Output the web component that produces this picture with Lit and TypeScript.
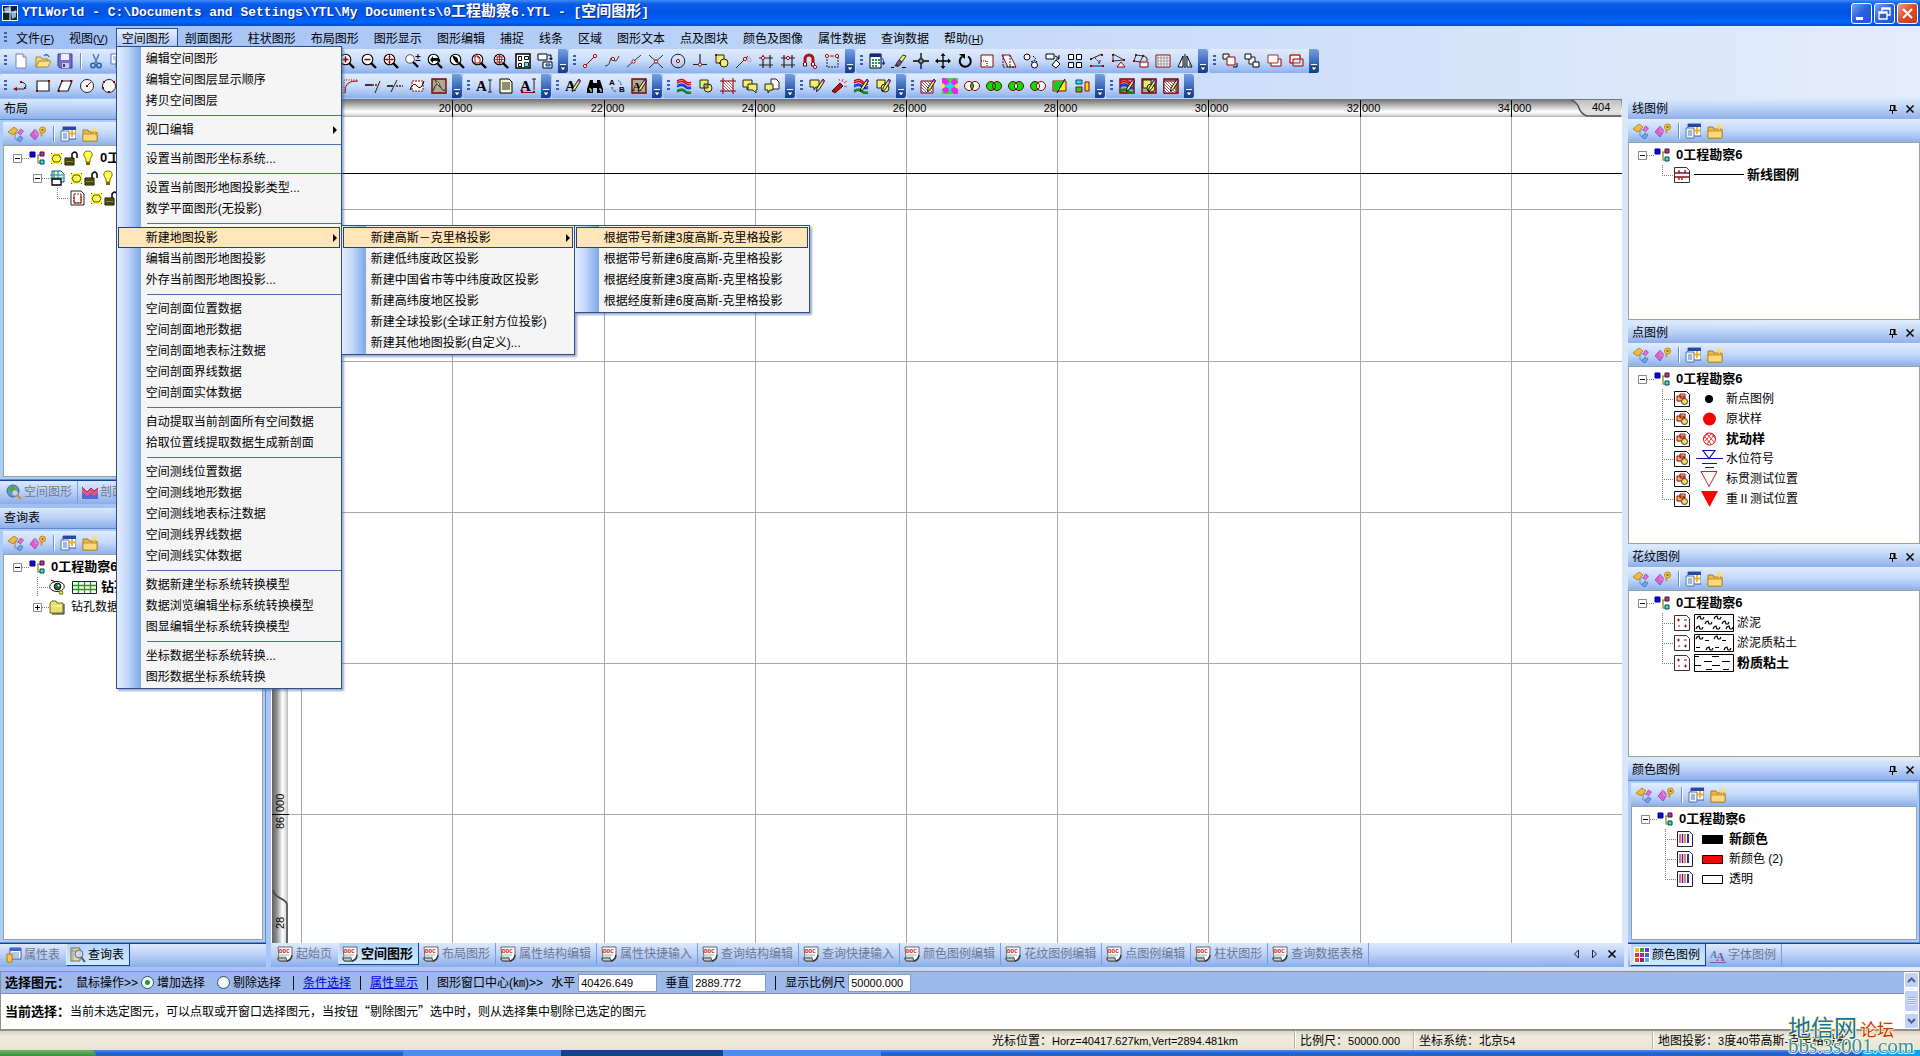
import { LitElement, html, svg, css, nothing } from "lit";
import { customElement } from "lit/decorators.js";
import { classMap } from "lit/directives/class-map.js";

const R = "#800000";

const mag = (inner: unknown) => svg`<circle cx="6.500" cy="6.500" r="5.300" fill="#fff" stroke="#000" stroke-width="1.100"/><path d="M10 10l5 5" stroke="#000" stroke-width="2.400"/>${inner}`;
const dot = (x: number, y: number, c = "#b00000") => svg`<circle cx=${x} cy=${y} r="1.600" fill="#fff" stroke=${c}/>`;
const nub = (x: number, y: number) => svg`<rect x=${x - 1} y=${y - 1} width="2" height="2" fill="#900000"/>`;
const pen = svg`<path d="M14 1l-6 9-.5 3.500 2.700-2L15.500 3z" fill="#f4ee70" stroke="#000" stroke-width=".9"/><path d="M13 2l2 1.500" stroke="#a020c0" stroke-width="2"/>`;
const shapes = svg`<path d="M2 2h8v8H2z" fill="#f4ee70" stroke="#222"/><circle cx="10" cy="10" r="4" fill="#f4ee70" stroke="#222"/>`;
const stripes = svg`<path d="M1 3q5-3 8 0t6 1M1 5q5-3 8 0t6 1" stroke="#e00000" fill="none" stroke-width="1.500"/><path d="M1 7.500q5-3 8 0t6 1M1 9q5-3 8 0t6 1" stroke="#1030e0" fill="none" stroke-width="1.300"/><path d="M1 12.500q5-3 8 0t6 1M1 14q5-3 8 0t6 1" stroke="#108020" fill="none" stroke-width="1.500"/>`;
const hatch = svg`<path d="M1 3h12v12H1z" fill="#fff" stroke=${R}/><path d="M1 12l3 3M1 9l6 6M1 6l9 9M1 3l12 12M4 3l9 9M7 3l6 6M10 3l3 3" stroke="#703050" stroke-width=".8"/>`;
const bubble = svg`<path d="M1 2h9v7H7l-2 3V9H1z" fill="#f4ee70" stroke="#222"/>`;
const bubble2 = svg`<path d="M6 6h9v6h-1v3l-3-3H6z" fill="#f4ee70" stroke="#222"/>`;
const pict = svg`<path d="M1 1h14v14H1z" fill="#b0a898" stroke=${R} stroke-width="1.400"/>`;
const venn = (a: string, m: string, b: string) => svg`<circle cx="5" cy="8" r="4.500" fill=${a}/><circle cx="11" cy="8" r="4.500" fill=${b}/><path d="M8 4.700a4.500 4.500 0 0 1 0 6.600a4.500 4.500 0 0 1 0-6.600z" fill=${m}/><circle cx="5" cy="8" r="4.500" fill="none" stroke=${R}/><circle cx="11" cy="8" r="4.500" fill="none" stroke=${R}/>`;
const G = "#00e000";
const W = "#fff";
const letterA = (x: number, s: number, c = "#000") => svg`<text x=${x} y="13" font-size=${s} font-weight="bold" font-family="Liberation Serif, serif" fill=${c}>A</text>`;

const icons: Record<string, unknown> = {
  blank: nothing,
  app: svg`<path d="M0 0h16v16H0z" fill="#fff"/><path d="M1 1h14v14H1z" fill="#123"/><path d="M2 3l5-1 2 3-3 3-3-1zM9 8l5-3v7l-4 2z" fill="#89b4dc"/><path d="M8 1v14M1 7h14" stroke="#fff"/>`,
  newf: svg`<path d="M3 1h7l3 3v11H3z" fill="#fff" stroke="#7482b8"/><path d="M10 1v3h3" fill="#dbe4f8" stroke="#7482b8"/>`,
  open: svg`<path d="M1 14V4h5l1 2h6v3" fill="#f7d67a" stroke="#a8842a"/><path d="M1 14l3-6h12l-3 6z" fill="#fbe28c" stroke="#a8842a"/><path d="M9 3q3-3 5 1" fill="none" stroke="#3a64b8" stroke-width="1.300"/>`,
  save: svg`<path d="M1 1h14v14H3l-2-2z" fill="#7070c8" stroke="#3c3c90"/><path d="M4 1h8v6H4z" fill="#eef"/><path d="M5 10h7v5H5z" fill="#ccd"/><path d="M6 11h2v3H6z" fill="#339"/>`,
  cut: svg`<path d="M5 1l4 9M11 1L7 10" stroke="#5078b8" stroke-width="1.500"/><circle cx="5" cy="12.500" r="2.200" fill="none" stroke="#2e58a8" stroke-width="1.500"/><circle cx="11" cy="12.500" r="2.200" fill="none" stroke="#2e58a8" stroke-width="1.500"/>`,
  copy: svg`<path d="M1 1h8v10H1z" fill="#fff" stroke="#5070b8"/><path d="M6 5h8v10H6z" fill="#fff" stroke="#5070b8"/><path d="M3 4h4M3 6h2M8 8h4M8 10h4M8 12h4" stroke="#7a94cc"/>`,
  zin: mag(svg`<path d="M3.500 6.500h6M6.500 3.500v6" stroke=${R} stroke-width="1.500"/>`),
  zout: mag(svg`<path d="M3.500 6.500h6" stroke=${R} stroke-width="1.500"/>`),
  zall: mag(svg`<path d="M2 6.500h9M6.500 2v9" stroke="#b00000"/><path d="M4 5v3M9 5v3M5 4h3M5 9h3" stroke="#b00000" stroke-width=".8"/>`),
  zpm: svg`<circle cx="5" cy="6" r="4.300" fill="#fff" stroke="#555"/><path d="M8 9l5 5" stroke="#000" stroke-width="2.400"/><path d="M10.500 3.500h5M13 1v5M10.500 7.500h5" stroke="#000"/>`,
  zprev: mag(svg`<path d="M3 7l3-4v2h4q4 0 3 5q-1-3-7-2v2z" fill="#000"/>`),
  znext: mag(svg`<path d="M9 9L8 5 4 3l1 3 2 3 2 1z" fill="#000" stroke="#000"/>`),
  zdoc: mag(svg`<path d="M4 3h3l2 2v5H4z" fill="#fff" stroke="#b00000"/><path d="M7 3v2h2" stroke="#b00000" fill="none"/>`),
  zglobe: mag(svg`<path d="M2 6.500h9M6.500 2v9M3 4h7M3 9h7M6.500 2q-5 4 0 9M6.500 2q5 4 0 9" stroke="#b00000" fill="none" stroke-width=".8"/>`),
  panes: svg`<path d="M1 1h14v14H1z" fill="#fff" stroke="#000" stroke-width="1.500"/><path d="M3.500 3.500h3v4h-3zM9.500 3.500h4v3h-4zM3.500 10.500h3v3h-3z" fill="#fff" stroke="#000"/><path d="M9.500 9.500h4v4h-4z" fill="#5fe8f0" stroke="#000" stroke-width=".8"/>`,
  swap: svg`<path d="M1 1h9v6H1zM6 9h9v6H6z" fill="#fff" stroke="#000"/><path d="M9 11h4v2H9z" fill="#5fe8f0" stroke="#138"/><path d="M11 2h3v4" fill="none" stroke="#000"/><path d="M12 5h4l-2 2.500z"/>`,
  line: svg`<path d="M3 13L13 3" stroke="#900"/>${dot(3, 13)}${dot(13, 3)}`,
  curve: svg`<path d="M1 13q4 0 5-5t3-2 3 2 3-5" stroke="#333" fill="none"/>${dot(9, 6)}`,
  mid: svg`<path d="M1 14L15 2" stroke="#333"/>${dot(7.5, 8.5)}`,
  cross: svg`<path d="M1 2l14 13M15 2L1 15" stroke="#333"/>${dot(8, 8.5)}`,
  centre: svg`<circle cx="8" cy="8" r="6.800" fill="none" stroke="#222"/>${dot(8, 8)}`,
  perp: svg`<path d="M8 1v10M1 11.500h14" stroke="#222" stroke-width="1.200"/>${dot(8, 11.5)}`,
  shape: svg`${shapes}${nub(2, 2)}${nub(6, 10)}`,
  tang: svg`<path d="M0 15L12 3" stroke="#333"/>${dot(9, 6)}<circle cx="13" cy="7" r="2" fill="none" stroke="#aaa"/>`,
  hashA: svg`<path d="M5 2v13M12 2v13M1 5h14M1 12h14" stroke="#222" stroke-width="1.200"/>${dot(5, 5)}`,
  hashB: svg`<path d="M4 2v13M12 2v13M1 5h14M1 12h14" stroke="#222" stroke-width="1.200"/>${dot(8, 5)}`,
  magnet: svg`<path d="M3 12V6a4 4 0 0 1 8 0v6" fill="none" stroke="#b01010" stroke-width="3"/><path d="M1.500 10v3h3v-3M9.500 10v3h3v-3" fill="#fff" stroke="#600"/>${dot(13, 14)}`,
  dots: svg`<path d="M3 3v11h11V3" fill="none" stroke="#222" stroke-dasharray="2 1"/>${dot(3, 3)}${dot(13, 3)}<path d="M6 3h4" stroke="#b00"/>`,
  calc: svg`<path d="M1 1h11v14H1z" fill="#fff" stroke="#000"/><path d="M1 1h11v3H1z" fill="#20208a"/><path d="M3 6h2v2H3zM6 6h2v2H6zM9 6h2v2H9zM3 9h2v2H3zM6 9h2v2H6zM9 9h2v2H9zM3 12h2v2H3zM6 12h2v2H6z" fill="#1a9a60"/><path d="M12 5q3 0 2.500 6M12.500 9l2 3 1.500-3" fill="none" stroke="#1020d0"/>`,
  erase: svg`<path d="M8 7l4-5 3 1-4 6z" fill="#f0f060" stroke="#333"/><path d="M5 11l3-4 3 2-3 4z" fill="#a030c0" stroke="#333"/><path d="M3 13l2-2 3 2-1 1z" fill="#333"/><path d="M0 14.500h3M11 14.500h4" stroke="#000"/>`,
  target: svg`<path d="M8 0v16M0 8h16" stroke="#000" stroke-width="1.300"/><path d="M6 6h4v4H6z" fill="#999" stroke="#000"/>`,
  move: svg`<path d="M8 2v12M2 8h12" stroke="#000" stroke-width="1.300"/><path d="M8 0l2.500 3h-5zM8 16l2.500-3h-5zM0 8l3-2.500v5zM16 8l-3-2.500v5z"/>`,
  rotate: svg`<path d="M11 3.500a5.500 5.500 0 1 1-6 .3" fill="none" stroke="#000" stroke-width="2"/><path d="M2 1h6v5z"/>`,
  scale: svg`<path d="M2 2h12v12H2z" fill="#fff" stroke="#900"/><path d="M2 8h6v6" fill="none" stroke="#000" stroke-dasharray="1 1"/>`,
  skew: svg`<path d="M1 2h8l6 12H7z" fill="#fff" stroke="#900"/><path d="M2 2v12h13M9 2v12" fill="none" stroke="#222" stroke-dasharray="2 1"/>`,
  dupe: svg`<circle cx="4" cy="4" r="3" fill="#fff" stroke="#000"/><circle cx="11.500" cy="12" r="3" fill="#fff" stroke="#000"/><path d="M8 9l4-2 2 2M10 3l3 3" fill="none" stroke="#000" stroke-dasharray="2 1"/>`,
  dupe2: svg`<path d="M1 1h8v5H1zM11 7l4 4-4 4-4-3z" fill="#fff" stroke="#000"/><path d="M10 3l4 2M14 2v4h-3" fill="none" stroke="#000"/>`,
  array: svg`<path d="M1.500 1.500h5v5h-5zM9.500 1.500h5v5h-5zM1.500 9.500h5v5h-5zM9.500 9.500h5v5h-5z" fill="#fff" stroke="#000"/>`,
  offset: svg`<path d="M2 6l11-5M2 13h12" stroke="#222"/><path d="M6 5l5 5M11 7v3H8" fill="none" stroke="#222" stroke-dasharray="2 1"/>${nub(2, 6)}${nub(13, 2)}${nub(2, 13)}${nub(14, 13)}`,
  tri: svg`<path d="M2 8V1l11 6z" fill="none" stroke="#333"/><path d="M10 9l4 5H6z" fill="#fff" stroke="#900"/>${nub(2, 2)}${nub(2, 8)}${nub(13, 7)}`,
  poly: svg`<path d="M3 2l7 1-3 6-6-1z" fill="none" stroke="#333"/><path d="M7 9h8v5H7z" fill="#fff" stroke="#900"/><path d="M10 2l4 3v3" fill="none" stroke="#222"/>${nub(3, 2)}${nub(10, 3)}${nub(1, 8)}`,
  mesh: svg`<path d="M1 2h14v12H1z" fill="#fff" stroke="#900"/><path d="M3 2v12M6 2v12M9 2v12M12 2v12M1 5h14M1 8h14M1 11h14" stroke="#999"/>`,
  mirror: svg`<path d="M8 1v14" stroke="#000"/><path d="M6 3v11H1zM10 3v11h5z" fill="#fff" stroke="#000"/><path d="M12 8v6h2z" fill="#888"/>`,
  front: svg`<path d="M1 1h6v5H1z" fill="#fff" stroke="#000"/><path d="M5 4h8v8H5z" fill="#fff" stroke="#900"/><path d="M11 14h4v-4" fill="none" stroke="#000"/>`,
  back: svg`<path d="M5 4h6v7H5z" fill="#fff" stroke="#222"/><path d="M1 1h6v5H1zM9 9h6v5H9z" fill="#fff" stroke="#000"/>`,
  up: svg`<path d="M5 6h10v7H5z" fill="#fff" stroke="#900"/><path d="M2 2h10v8H2z" fill="#fff" stroke="#b22"/>`,
  down: svg`<path d="M2 2h10v8H2z" fill="#fff" stroke="#b22"/><path d="M5 6h10v7H5z" fill="#dce8fb" stroke="#900"/><path d="M2 2h10v8H2z" fill="none" stroke="#b22"/>`,
  uturn: svg`<path d="M2 11h9q4-3 0-6l-3-1" fill="none" stroke="#222"/><path d="M0 11l4-2v4z" fill="#900"/>${nub(8, 4)}${nub(12, 10)}`,
  rect: svg`<path d="M2 3h12v10H2z" fill="#fff" stroke="#222" stroke-width="1.200"/>${nub(2, 13)}${nub(14, 3)}`,
  para: svg`<path d="M5 3h10l-4 10H1z" fill="#fff" stroke="#222" stroke-width="1.200"/>${nub(2, 13)}${nub(5, 3)}${nub(14, 3)}`,
  circ: svg`<circle cx="8" cy="8" r="6.500" fill="#fff" stroke="#222"/><path d="M8 8l4-4" stroke="#900"/>${nub(8, 8)}`,
  circ3: svg`<circle cx="8" cy="8" r="6.500" fill="#fff" stroke="#222"/>${nub(3, 4)}${nub(13, 4)}${nub(8, 14)}${nub(2, 10)}`,
  fillet: svg`<path d="M2 15q-1-13 13-12" fill="none" stroke="#900"/><path d="M1 15V2h14" fill="none" stroke="#900" stroke-dasharray="1 1.500"/>`,
  extend: svg`<path d="M0 7h7" stroke="#000" stroke-width="1.500"/><path d="M7 7h6" stroke="#900" stroke-width="1.500" stroke-dasharray="2 1"/><path d="M10 15l5-12" stroke="#222"/>`,
  trim: svg`<path d="M0 8h6" stroke="#000" stroke-width="1.500"/><path d="M9 8h7" stroke="#900" stroke-width="1.500" stroke-dasharray="2 1"/><path d="M4 14l6-12" stroke="#222"/>`,
  wave: svg`<path d="M3 3h11v10H3z" fill="#fff" stroke="#900" stroke-dasharray="2 1"/><path d="M1 12q3-9 7-4t7-5" fill="none" stroke="#000"/>`,
  photo: svg`${pict}<path d="M2 13q4-11 7-5t5 4" fill="none" stroke="#222"/><path d="M4 2l2 4 3 3-1-4z" fill="#f4ee40" stroke="#222" stroke-width=".7"/>`,
  textI: svg`${letterA(0, 15)}<path d="M12 2h4M12 14h4M14 2v12" stroke="#222"/>`,
  note: svg`<path d="M2 1h9l3 3v11H2z" fill="#fbfbd0" stroke="#000"/><path d="M4 5h8M4 7h8M4 9h8M4 11h8" stroke="#222"/>`,
  textR: svg`${letterA(0, 15)}<path d="M12 1h4M14 1v11" stroke="#222"/><path d="M1 14.500h14" stroke="#900"/>${nub(2, 14)}${nub(14, 14)}`,
  textP: svg`${letterA(0, 15)}${pen}`,
  find: svg`<path d="M3 2h3v3h4V2h3l3 9v4h-6v-5H6v5H0v-4z" fill="#000"/><path d="M2 11h2v3M12 11h2v3" stroke="#fff" fill="none"/>`,
  replace: svg`<text x="0" y="7" font-size="8" font-weight="bold" font-family="Liberation Sans, sans-serif">A</text><text x="10" y="14" font-size="8" font-weight="bold" font-family="Liberation Sans, sans-serif">B</text><path d="M3 9q0 5 5 4M12 7q0-3-3-5" fill="none" stroke="#222" stroke-dasharray="1.500 1"/>`,
  photoA: svg`${pict}${letterA(1, 13)}${pen}`,
  stripes,
  shape2: svg`${shapes}<path d="M6 6h4v4H6z" fill="#a8b060" stroke="#222"/>`,
  crop: svg`<path d="M3 3h10v10H3z" fill="#fff"/><path d="M3 10l3 3M3 7l6 6M3 4l9 9M5 3l8 8M8 3l5 5" stroke="#c03030" stroke-width=".8"/><path d="M3 0v16M13 0v16M0 3h16M0 13h16" stroke=${R}/>`,
  bub1: svg`${bubble}${bubble2}`,
  bub2: svg`<path d="M7 1h5l3 3v7H7z" fill="#fff" stroke="#222"/><path d="M1 6h8v6H6l-2 3v-3H1z" fill="#f4ee70" stroke="#222"/>`,
  bubP: svg`${bubble}${pen}`,
  marker: svg`<path d="M1 13l8-8 3 3-8 7z" fill="#b01818" stroke="#500"/><path d="M11 4l1-3M13 5l3-2M13 8l3 1M9 3L8 1" stroke="#d04040"/>`,
  stripesP: svg`${stripes}${pen}`,
  shapeP: svg`${shapes}${pen}`,
  hatchP: svg`${hatch}${pen}`,
  burst: svg`<path d="M0 0h16v16H0z" fill="#f020f0"/><path d="M4 0h8L8 5zM4 16h8l-4-5z" fill="#30e030"/><path d="M0 5v6l5-3zM16 5v6l-5-3z" fill="#f0f020"/><path d="M12 0h4v4zM0 16v-4l4 4z" fill="#30e030"/><path d="M8 3l2 3 4 2-4 2-2 4-2-4-4-2 4-2z" fill="#20d8f0"/>`,
  vennI: venn(W, G, W),
  vennU: venn(G, G, G),
  vennX: venn(G, W, G),
  vennD: venn(G, W, W),
  split: svg`<path d="M1 3h13v10H1z" fill="#f0f020" stroke="#900"/><path d="M2 4h9L6 12H2z" fill="#00d020"/><path d="M5 15l8-14" stroke="#000"/>`,
  blocks: svg`<path d="M2 2h6v4H2z" fill="#30d8f0" stroke="#146"/><path d="M2 9h6v5H2z" fill="#20d020" stroke="#900"/><path d="M11 4h4v9h-4z" fill="#f8e020" stroke="#900"/>`,
  boxStripes: svg`${pict}${stripes}${pen}`,
  boxShape: svg`${pict}${shapes}${pen}`,
  boxHatch: svg`${pict}${hatch}${pen}`,
  objs: svg`<path d="M0 6l6-5 4 3-5 5z" fill="#f0bc3c" stroke="#a87814" stroke-width=".8"/><path d="M7 7h4M7 7v6h3" fill="none" stroke="#888"/><path d="M12.500 3l3 2-3 4-2.500-2z" fill="#e070d8" stroke="#a040a0" stroke-width=".7"/><path d="M12 10l3 2-3 4-3-2z" fill="#70a8f0" stroke="#3060b0" stroke-width=".7"/>`,
  gem: svg`<path d="M5 3l4 5-4 6-5-5z" fill="#d860d0" stroke="#983898" stroke-width=".7"/><path d="M5 3l1 6 3-1" fill="none" stroke="#f0a0e8" stroke-width=".8"/><circle cx="12.500" cy="4" r="3" fill="#f4c040" stroke="#a87814" stroke-width=".8"/><circle cx="12.500" cy="4" r="1" fill="#805800"/><path d="M11.500 7v3.500" stroke="#d09820" stroke-width="2"/>`,
  table: svg`<path d="M3 1h13v12H3z" fill="#fff" stroke="#3a5c98"/><path d="M3 1h13v3H3z" fill="#2848a8"/><path d="M1 5h8v10H1z" fill="#eef3fc" stroke="#5878a8"/><path d="M3 8h4M3 10h4M3 12h4" stroke="#5878a8"/><path d="M12 4v7M8.500 7.500h7" stroke="#e8b020" stroke-width="1.800"/>`,
  newdir: svg`<path d="M1 15V4h5l1 2h8v9z" fill="#f0b840" stroke="#a87c1c"/><path d="M1 15V8h14v7z" fill="#fbd878" stroke="#a87c1c" stroke-width=".7"/><path d="M12.500 0v7M9 3.500h7M10 1l5 5M15 1l-5 5" stroke="#f8e060"/>`,
  root: svg`<path d="M8 5h3M9 5v8h3" fill="none" stroke="#908010" stroke-width="1.200"/><path d="M1 2h5v5H1z" fill="#0808d0" stroke="#000080"/><path d="M11 2h4v4h-4z" fill="#f010d0" stroke="#222"/><path d="M11 10h4v4h-4z" fill="#20e8e8" stroke="#044"/>`,
  sun: svg`<path d="M3 3h11v11H3z" fill="#ffff40"/><path d="M6 5h5l2 3.500L11 12H6L4 8.500z" fill="#f8f860" stroke="#605000"/><path d="M3 3l1 1M14 3l-1 1M3 14l1-1M14 14l-1-1" stroke="#605000"/>`,
  lock: svg`<path d="M1 8h9v7H1z" fill="#8c8c10" stroke="#000"/><path d="M2 10h7M2 13h7" stroke="#000"/><path d="M8 8V4q3-4 5 0v4" fill="none" stroke="#000" stroke-width="1.500"/>`,
  bulb: svg`<path d="M8 1q5 0 4 5l-2 3v3H6V9L4 6q-1-5 4-5z" fill="#ffff50" stroke="#807000"/><path d="M6 12h4v3H6z" fill="#806800"/>`,
  sheets: svg`<path d="M3 1h9l3 3v8H3z" fill="#e8f4f4" stroke="#066"/><path d="M1 5h13M1 8h13M5 1v11M9 1v11" stroke="#188"/><path d="M3 9h9v6H3z" fill="#fff" stroke="#000" stroke-width="1.300"/>`,
  page: svg`<path d="M2 1h10l3 3v11H2z" fill="#fff" stroke="#222"/><path d="M5 4h7v9H5z" fill="#fff" stroke="#a01010" stroke-dasharray="2 1"/><path d="M5 6v7h7V5" fill="none" stroke="#a01010"/>`,
  lineDoc: svg`<path d="M.5 .5h12l3 3v12H.5z" fill="#fff" stroke="#333"/><path d="M1 6h14M1 10h14M5 3v3M8 10v3M11 3v3M5 10v3" stroke="#901010" stroke-width="1.300"/>`,
  pointDoc: svg`<path d="M.5 .5h12l3 3v12H.5z" fill="#fff" stroke="#111"/><path d="M3 5h7v5H3z" fill="#f8b860" stroke="#900"/><path d="M6 3h5v4H6z" fill="none" stroke="#900"/><circle cx="10.500" cy="10.500" r="3" fill="#e8e060" stroke="#333"/>`,
  patDoc: svg`<path d="M.5 .5h12l3 3v12H.5z" fill="#fff" stroke="#333"/><path d="M3 5h3M4.500 3.500v3M10 5h3M4 11h2M10 11h3M11.500 9.500v3" stroke="#a01010"/>`,
  colDoc: svg`<path d="M.5 .5h12l3 3v12H.5z" fill="#fff" stroke="#222"/><path d="M3 3v9" stroke="#e03080" stroke-width="1.500"/><path d="M5.500 3v9" stroke="#402090" stroke-width="1.500"/><path d="M8 3v9" stroke="#e06010" stroke-width="1.500"/><path d="M11 3v9" stroke="#1838c0" stroke-width="2"/>`,
  eye: svg`<ellipse cx="8" cy="7.500" rx="7.300" ry="5" fill="#fff" stroke="#111"/><circle cx="8.500" cy="7.500" r="3.300" fill="#2a6a50" stroke="#000"/><circle cx="9.500" cy="6.500" r="1" fill="#fff"/><path d="M2 1l4 2M10 13l4 2" stroke="#000"/><circle cx="12" cy="13.500" r="1.800" fill="#f0f040" stroke="#660"/>`,
  dir: svg`<path d="M1 14V4l2-2h4l1 2h6v10z" fill="#e8e070" stroke="#706820"/><path d="M2 7h11" stroke="#fffcc0"/><path d="M15 5v10H3" fill="none" stroke="#222"/>`,
  globe: svg`<circle cx="7" cy="7" r="6" fill="#5a98d8" stroke="#3a6890"/><path d="M3 4q4-4 6 0t-3 4-3-4zM9 8q3 0 2 3" fill="#58a838"/><circle cx="9" cy="9" r="3.200" fill="#cfe6fa" fill-opacity=".8" stroke="#888"/><path d="M11 11l4 4" stroke="#c89030" stroke-width="2"/>`,
  chart: svg`<path d="M0 3l5 5 4-4 3 3 4-3v11H0z" fill="#e85080"/><path d="M0 8l5 4 4-3 3 3 4-3v6H0z" fill="#5868d0"/><path d="M0 3l5 5 4-4 3 3 4-3" fill="none" stroke="#a02060"/>`,
  attr: svg`<path d="M4 1h11v11H4z" fill="#fff" stroke="#3858a0"/><path d="M4 1h11v3H4z" fill="#3868c8"/><path d="M6 6h7M6 8h7M6 10h7" stroke="#7890c0"/><path d="M1 7h5v8H1z" fill="#f8c840" stroke="#a88010"/>`,
  query: svg`<path d="M1 1h9v13H1z" fill="#e8dcb0" stroke="#806848"/><path d="M3 1v13M1 4h9" stroke="#8898c0"/><circle cx="9" cy="7" r="4" fill="#c8dcf8" fill-opacity=".8" stroke="#667"/><path d="M11 10l4 5" stroke="#555" stroke-width="2"/>`,
  palette: svg`<path d="M0 0h16v16H0z" fill="#fff"/><path d="M1 1h4v4H1z" fill="#f8b820"/><path d="M6 1h4v4H6z" fill="#38a830"/><path d="M11 1h4v4h-4z" fill="#7030d0"/><path d="M1 6h4v4H1z" fill="#e83030"/><path d="M6 6h4v4H6z" fill="#c02080"/><path d="M11 6h4v4h-4z" fill="#3070e0"/><path d="M1 11h4v4H1z" fill="#e05020"/><path d="M6 11h4v4H6z" fill="#8020a0"/><path d="M11 11h4v4h-4z" fill="#38b8f0"/>`,
  font: svg`<text x="0" y="11" font-size="11" font-style="italic" font-weight="bold" font-family="Liberation Serif, serif" fill="#5878c0">A</text><text x="6" y="14" font-size="12" font-weight="bold" font-family="Liberation Serif, serif" fill="#8058a0">A</text><path d="M0 15.500h16" stroke="#8058a0"/>`,
  doc: svg`<path d="M1 1h14v9q0 5-5 5H3q-3 0-2-4h1z" fill="#fff" stroke="#666"/><path d="M3 9h9M3 11h7" stroke="#90b8b0"/><path d="M1 12h8q0 3 2 3H3q-2 0-2-3z" fill="#b8d0cc" stroke="#444"/><path d="M15 9q-1 5-5 6" fill="none" stroke="#333" stroke-width="1.300"/><text x="2" y="7" font-size="6" font-weight="bold" font-family="Liberation Mono, monospace" fill="#d02020">DOC</text>`,
  pin: svg`<path d="M5.500 4.500h4v5h-4z" fill="none" stroke="#000"/><path d="M9.500 4v6" stroke="#000" stroke-width="2"/><path d="M4 9.500h8M7.500 10v3" stroke="#000"/>`,
  close: svg`<path d="M4.500 4.500l7 7M11.500 4.500l-7 7" stroke="#000" stroke-width="1.500"/>`,
  prev: svg`<path d="M10.500 4v8l-4-4z" fill="none" stroke="#223"/>`,
  next: svg`<path d="M6.500 4v8l4-4z" fill="none" stroke="#223"/>`,
};

const icon = (name: string) => html`<svg class="ic" viewBox="0 0 16 16" aria-hidden="true">${icons[name]}</svg>`;

const filler = (n: number) => Array.from({ length: n }, () => "blank");

const barOne: string[][] = [
  ["newf", "open", "save", "|", "cut", "copy", ...filler(9), "|", "zin", "zout", "zall", "zpm", "zprev", "znext", "zdoc", "zglobe", "panes", "swap"],
  ["line", "curve", "mid", "cross", "centre", "perp", "shape", "tang", "hashA", "hashB", "magnet", "dots"],
  ["calc", "erase", "target", "move", "rotate", "scale", "skew", "dupe", "dupe2", "array", "offset", "tri", "poly", "mesh", "mirror"],
  ["front", "back", "up", "down"],
];
const barTwo: string[][] = [
  ["uturn", "rect", "para", "circ", "circ3", ...filler(10), "fillet", "extend", "trim", "wave", "photo"],
  ["textI", "note", "textR"],
  ["textP", "find", "replace", "photoA"],
  ["stripes", "shape2", "crop", "bub1", "bub2"],
  ["bubP", "marker", "stripesP", "shapeP"],
  ["hatchP", "burst", "vennI", "vennU", "vennX", "vennD", "split", "blocks"],
  ["boxStripes", "boxShape", "boxHatch"],
];

interface Item { label: string; sub?: Entry[]; }
type Entry = Item | string | null;

const zoneMenu: Entry[] = ["根据带号新建3度高斯-克里格投影", "根据带号新建6度高斯-克里格投影", "根据经度新建3度高斯-克里格投影", "根据经度新建6度高斯-克里格投影"];
const projectionMenu: Entry[] = [
  { label: "新建高斯－克里格投影", sub: zoneMenu },
  "新建低纬度政区投影", "新建中国省市等中纬度政区投影", "新建高纬度地区投影", "新建全球投影(全球正射方位投影)", "新建其他地图投影(自定义)...",
];
const spaceMenu: Entry[] = [
  "编辑空间图形", "编辑空间图层显示顺序", "拷贝空间图层", null,
  { label: "视口编辑", sub: [] }, null,
  "设置当前图形坐标系统...", null,
  "设置当前图形地图投影类型...", "数学平面图形(无投影)", null,
  { label: "新建地图投影", sub: projectionMenu }, "编辑当前图形地图投影", "外存当前图形地图投影...", null,
  "空间剖面位置数据", "空间剖面地形数据", "空间剖面地表标注数据", "空间剖面界线数据", "空间剖面实体数据", null,
  "自动提取当前剖面所有空间数据", "拾取位置线提取数据生成新剖面", null,
  "空间测线位置数据", "空间测线地形数据", "空间测线地表标注数据", "空间测线界线数据", "空间测线实体数据", null,
  "数据新建坐标系统转换模型", "数据浏览编辑坐标系统转换模型", "图显编辑坐标系统转换模型", null,
  "坐标数据坐标系统转换...", "图形数据坐标系统转换",
];

const mnemonic = (t: string, k: string) => html`${t}<span class="num">(<u>${k}</u>)</span>`;
const menus: unknown[] = [
  mnemonic("文件", "F"), mnemonic("视图", "V"), "空间图形", "剖面图形", "柱状图形", "布局图形", "图形显示", "图形编辑", "捕捉", "线条", "区域",
  "图形文本", "点及图块", "颜色及图像", "属性数据", "查询数据", mnemonic("帮助", "H"),
];

const docTabs = ["起始页", "空间图形", "布局图形", "属性结构编辑", "属性快捷输入", "查询结构编辑", "查询快捷输入", "颜色图例编辑", "花纹图例编辑", "点图例编辑", "柱状图形", "查询数据表格"];

const project = "0工程勘察6";

interface Row { level: number; kind: "open" | "shut" | "leaf"; last?: boolean; cells: unknown; text: string; bold?: boolean; }

const rootRow: Row = { level: 0, kind: "open", cells: icon("root"), text: project, bold: true };
const layerCells = (name: string) => html`${icon(name)}<span class="layer">${icon("sun")}${icon("lock")}${icon("bulb")}</span>`;

const symbol = (body: unknown) => html`<svg class="sym" viewBox="0 0 28 20" aria-hidden="true">${body}</svg>`;
const pattern = (body: unknown) => html`<svg class="pat" viewBox="0 0 40 18" aria-hidden="true"><path d="M.5 .5h39v17H.5z" fill="#fff" stroke="#000"/>${body}</svg>`;
const swatch = (c: string) => html`<svg class="swatch" viewBox="0 0 21 9" aria-hidden="true"><path d="M.5 .5h20v8H.5z" fill=${c} stroke="#000"/></svg>`;
const squig = (x: number, y: number) => svg`<path d="M${x} ${y + 3}l1-2 2-1 1 3 2 0 1-2" fill="none" stroke="#000" stroke-width="1.200"/>`;

const lineRows: Row[] = [rootRow, { level: 1, kind: "leaf", last: true, cells: html`${icon("lineDoc")}<svg class="stroke" viewBox="0 0 50 2" aria-hidden="true"><path d="M0 .5h50" stroke="#000"/></svg>`, text: "新线图例", bold: true }];

const pointRow = (text: string, body: unknown, bold = false, last = false): Row => ({ level: 1, kind: "leaf", last, bold, text, cells: html`${icon("pointDoc")}${symbol(body)}` });
const pointRows: Row[] = [
  rootRow,
  pointRow("新点图例", svg`<circle cx="14" cy="10" r="4" fill="#000"/>`),
  pointRow("原状样", svg`<circle cx="14.500" cy="10" r="6.500" fill="#f00"/>`),
  pointRow("扰动样", svg`<circle cx="14.500" cy="10" r="6" fill="#fff" stroke="#e00"/><path d="M10 8l6 7M12 5l7 8M16 4l4 5M19 6l-7 9M17 4l-7 8M13 4l-4 5" stroke="#e00" stroke-width=".8"/>`, true),
  pointRow("水位符号", svg`<path d="M8 1.500h12l-6 8zM1 9.500h27M7 14.500h15M10 18.500h9" fill="none" stroke="#1010b0" stroke-width="1.200"/>`),
  pointRow("标贯测试位置", svg`<path d="M6 2.500h16l-8 15z" fill="#fff" stroke="#d02020"/>`),
  pointRow("重Ⅱ测试位置", svg`<path d="M6 2h17l-8.500 16z" fill="#f00"/>`, false, true),
];

const patRow = (text: string, body: unknown, bold = false, last = false): Row => ({ level: 1, kind: "leaf", last, bold, text, cells: html`${icon("patDoc")}${pattern(body)}` });
const patRows: Row[] = [
  rootRow,
  patRow("淤泥", svg`${squig(3, 2)}${squig(20, 2)}${squig(11, 7)}${squig(28, 7)}${squig(2, 12)}${squig(19, 12)}${squig(32, 12)}`),
  patRow("淤泥质粘土", svg`${squig(2, 2)}${squig(20, 2)}${squig(12, 13)}${squig(30, 13)}<path d="M11 6.500h4M28 6.500h4M2 13.500h4M21 13.500h4" stroke="#000"/>`),
  patRow("粉质粘土", svg`<path d="M1 2.500h4M18 2.500h7M10 7.500h8M28 7.500h8M1 11.500h6M18 11.500h8M12 15.500h6M29 15.500h6" stroke="#000"/>`, true, true),
];

const colRow = (text: string, c: string, bold = false, last = false): Row => ({ level: 1, kind: "leaf", last, bold, text, cells: html`${icon("colDoc")}${swatch(c)}` });
const colRows: Row[] = [rootRow, colRow("新颜色", "#000", true), colRow("新颜色 (2)", "#f00"), colRow("透明", "#fff", false, true)];

const layoutRows: Row[] = [
  { level: 0, kind: "open", cells: layerCells("root"), text: project, bold: true },
  { level: 1, kind: "open", cells: layerCells("sheets"), text: "" },
  { level: 2, kind: "leaf", last: true, cells: layerCells("page"), text: "" },
];
const queryRows: Row[] = [
  rootRow,
  { level: 1, kind: "leaf", bold: true, text: "钻孔", cells: html`${icon("eye")}<svg class="grid" viewBox="0 0 25 13" aria-hidden="true"><path d="M.5 .5h24v12H.5z" fill="#fff" stroke="#222"/><path d="M6.500 1v11M12.500 1v11M18.500 1v11M1 4.500h23M1 8.500h23" stroke="#18a018" stroke-width="1.300"/></svg>` },
  { level: 1, kind: "shut", text: "钻孔数据", cells: icon("dir") },
];

const columns: [number, string][] = [[30, ""], [181, "20"], [333, "22"], [484, "24"], [635, "26"], [786, "28"], [937, "30"], [1089, "32"], [1240, "34"]];
const lines = [110, 262, 413, 564, 715];

@customElement("app-root")
export class AppRoot extends LitElement {
  static styles = css`
    :host {
      display: flex; flex-direction: column; min-height: 100vh; color: #000;
      font: 12px/16px "Liberation Sans", "Noto Sans CJK SC", sans-serif;
      background: linear-gradient(90deg, #9ebef5, #c4d9f8 50%, #e4edfc);
    }
    * { box-sizing: border-box; }
    button, input { font: inherit; color: inherit; margin: 0; padding: 0; border: 0; background: none; border-radius: 0; }
    svg { display: block; flex: none; }
    .ic { width: 16px; height: 16px; }
    b { font-size: 13px; }
    .num { font-size: 11px; }

    .title { display: flex; align-items: center; gap: 4px; height: 26px; padding: 0 2px; color: #fff;
      background: linear-gradient(#3c8cf8, #0a5be8 15%, #0054e3 50%, #0066ff 85%, #0a48c0); }
    .title h1 { flex: 1; margin: 0; font: bold 13px/20px "Liberation Mono", "Noto Sans CJK SC", monospace; text-shadow: 1px 1px #0a2a80; white-space: nowrap; }
    .title h1 span { font-size: 15px; }
    .winbtns { display: flex; gap: 2px; }
    .winbtns button { width: 21px; height: 21px; border: 1px solid #fff; border-radius: 3px; background: linear-gradient(135deg, #7aa2f4, #2a5fdc 50%, #2458d0); }
    .winbtns button:last-child { background: linear-gradient(135deg, #f0a088, #dc4a20 50%, #c83c14); }
    .winbtns svg { width: 19px; height: 19px; }

    .menubar { display: flex; align-items: flex-start; height: 23px; padding-left: 4px; }
    .menubar::before { flex: none; margin-right: 2px; }
    .menubar::before, .grip::before { content: ""; display: block; width: 3px; height: 12px; margin-top: 6px; background: repeating-linear-gradient(#3a5ea8 0 2px, transparent 2px 4px); }
    .menubar > div { position: relative; margin-top: 2px; }
    .menubar > div > button { height: 20px; padding: 0 7px; border: 1px solid transparent; border-width: 1px 1px 0 0; white-space: nowrap; }
    .menubar > .on > button { border-color: #2a4f8f; border-left: 1px solid #2a4f8f; padding: 0 7px 0 5px; background: linear-gradient(#e8f0fd, #a9c4f2); }

    .menu { position: absolute; z-index: 5; left: 0; top: 18px; width: 226px; margin: 0; padding: 1px; list-style: none; border: 1px solid #2a4f8f;
      background: linear-gradient(90deg, #e3edfe, #c6d9fa 40%, #7fa8e8) 0 0 / 24px 100% no-repeat, #f5f5f5; box-shadow: 2px 2px 2px rgba(60, 90, 150, .5); }
    .menu .menu { top: -2px; left: calc(100% + 1px); width: 234px; }
    .menu .menu .menu { width: 236px; }
    .menu li { position: relative; }
    .menu .rule { height: 8px; padding: 4px 0 0 29px; margin-right: -1px; }
    .menu .rule::before { content: ""; display: block; height: 1px; background: #4a70b0; }
    .menu button { display: flex; align-items: center; width: 100%; height: 21px; padding: 0 2px 0 27px; border: 1px solid transparent; white-space: nowrap; text-align: left; }
    .menu .lit > button { border-color: #2a4070; background: #fee6ba; }
    .menu button i { margin-left: auto; border: 4px solid transparent; border-left-color: #000; border-right: 0; }

    .bar { display: flex; gap: 1px; height: 25px; }
    .seg { display: flex; align-items: center; height: 24px; border-radius: 2px; background: linear-gradient(#e0ebfd, #c8dcfa 50%, #8cb0ec); }
    .grip { width: 10px; flex: none; padding-left: 4px; align-self: flex-start; }
    .seg button, .tools button { display: grid; place-items: center; width: 22px; height: 22px; }
    .sep { width: 9px; height: 16px; border-left: 1px solid #6a8ccb; box-shadow: inset 1px 0 #fff; margin-left: 4px; margin-right: -4px; background: none; }
    .seg .cap { width: 10px; height: 24px; margin-left: 2px; align-items: end; border-radius: 0 3px 3px 0; background: linear-gradient(#78a0e0, #0a3a9c); }

    .main { flex: 1; display: grid; grid-template-columns: 266px minmax(0, 1fr) 292px; }
    .left { display: grid; grid-template-rows: 405fr 459fr; gap: 4px; }
    .right { display: grid; grid-template-rows: 221fr 221fr 210fr 207fr; gap: 3px; }
    .panel { display: flex; flex-direction: column; min-width: 0; }
    .panel h2 { display: flex; align-items: center; height: 20px; flex: none; margin: 0; padding: 0 2px 0 4px; font: inherit; background: linear-gradient(#dbe8fc, #b8cff5 50%, #8db0ea); }
    .panel h2 span { flex: 1; }
    .panel h2 button + button { margin-left: 1px; }
    .body { flex: 1; display: flex; flex-direction: column; }
    .framed .body { padding: 2px 2px 2px 3px; background: #a9cdf8; border: 0 solid #5c8ad8; border-width: 1px 1px 1px 0; }
    .tools { display: flex; align-items: center; height: 23px; flex: none; padding-left: 2px; background: linear-gradient(#e2edff, #c3d8fa 50%, #8eb2ec); }
    .tools .sep { margin-right: -5px; }
    .tree { flex: 1; margin: 0; padding: 2px 1px; list-style: none; background: #fff; border: 1px solid #a0a090; }
    .tree li { display: flex; align-items: center; height: 20px; white-space: nowrap; }
    .lv0 { padding-left: 8px; }
    .lv1 { padding-left: 32px; }
    .lv1.node { padding-left: 28px; }
    .lv2 { padding-left: 52px; }
    .twist { width: 9px; height: 9px; }
    .lead { width: 7px; height: 1px; background: repeating-linear-gradient(90deg, #808080 0 1px, transparent 1px 2px); }
    .elbow { width: 12px; height: 20px; }
    .tree .txt { margin-left: 6px; }
    .layer { display: flex; margin: 0 -2px 0 3px; }
    .sym { width: 28px; height: 20px; margin: 0 2px 0 5px; }
    .sym + .txt { margin-left: 1px; }
    .pat { width: 40px; height: 18px; margin-left: 4px; }
    .pat + .txt, .stroke + .txt { margin-left: 3px; }
    .stroke { width: 50px; height: 2px; margin-left: 4px; }
    .swatch { width: 21px; height: 9px; margin-left: 9px; }
    .grid { width: 25px; height: 13px; margin: 0 -2px 0 7px; }

    .tabs { display: flex; height: 24px; flex: none; padding-left: 2px; color: #6c7890; background: linear-gradient(#dde9fc, #b9cff6 50%, #89ade9); }
    .left .tabs, .right .tabs { border-top: 1px solid #12409a; }
    .tabs button { display: flex; align-items: center; gap: 3px; height: 22px; padding: 0 5px 0 4px; border-right: 1px solid transparent; white-space: nowrap; }
    .dock-tabs button { gap: 2px; }
    .tabs button.div { border-right-color: #7a9cd8; }
    .tabs .cur { color: #000; border: 1px solid #12409a; border-top: 0; border-left-color: #dce9fc; padding-left: 3px; background: linear-gradient(#b4d4fc, #cfeafe); }
    .tabs .nav { margin-left: auto; display: flex; padding-right: 2px; }
    .tabs .nav button { width: 18px; padding: 0; border: 0; }

    .center { display: flex; flex-direction: column; margin: 0 4px 0 5px; min-width: 0; }
    .canvas { position: relative; flex: 1; min-height: 300px; margin-right: 2px; background: #fff; overflow: hidden; }
    .canvas svg.map { position: absolute; inset: 0; width: 100%; height: 100%; font: 12px "Liberation Sans", sans-serif; }

    .query { display: flex; height: 60px; margin-top: 4px; background: #fff; border: 1px solid #8f8f88; border-bottom-width: 2px; }
    .query .cols { flex: 1; }
    .opts { display: flex; align-items: center; height: 22px; padding-left: 4px; background: #9db8ea; border-bottom: 1px solid #7c8ca8; white-space: nowrap; }
    .opts label { display: flex; align-items: center; gap: 3px; }
    .opts .r1 { margin: 0 12px 0 3px; }
    .opts a { color: #0000e0; }
    .opts hr { width: 1px; height: 14px; margin: 0 9px; border: 0; background: #111; }
    .opts .first { margin-left: 12px; }
    .opts .op { margin-left: 6px; }
    .opts input[type="text"] { height: 18px; padding: 0 2px; background: #fff; border: 1px solid #7f9db9; font-size: 11px; }
    .w1 { width: 79px; } .w2 { width: 74px; } .w3 { width: 63px; }
    .opts .gap { margin: 0 8px; }
    .opts input[type="radio"] { appearance: none; width: 13px; height: 13px; border: 1px solid #2a5a80; border-radius: 50%; background: radial-gradient(#fff, #e8ece8); }
    .opts input[type="radio"]:checked { background: radial-gradient(#21a121 2px, #fff 3px); }
    .msg { margin: 0; padding: 9px 4px; white-space: nowrap; }
    .msg span { font-family: "Noto Sans CJK SC", sans-serif; }
    .scroll { display: flex; flex-direction: column; justify-content: space-between; width: 15px; background: #eef2fd; }
    .scroll button { height: 16px; border: 1px solid #fff; border-radius: 2px; background: #c0d2fb; display: grid; place-items: center; }
    .scroll .thumb { height: 22px; }
    .scroll .thumb::before { content: ""; width: 7px; height: 8px; background: repeating-linear-gradient(#8fa8e0 0 1px, #eef 1px 2px); }
    .status { display: flex; justify-content: flex-end; height: 19px; line-height: 20px; background: linear-gradient(#d8d4c4, #efecdf 30%, #e8e4d0); white-space: nowrap; }
    .status span { padding-left: 5px; border-left: 1px solid #b8b4a0; box-shadow: inset 1px 0 #fff; margin-bottom: 1px; }
    .status i { font-style: normal; font-size: 11px; }
    .s1 { width: 307px; } .status .s1 { border: 0; box-shadow: none; }
    .s2 { width: 119px; } .s3 { width: 239px; } .s4 { width: 268px; }
    .task { display: flex; height: 6px; background: linear-gradient(#4a90f4, #2360d8 50%); }
    .task i:nth-child(1) { width: 96px; border-radius: 0 6px 0 0; background: linear-gradient(#6cb86c, #3c8f3c); }
    .task i:nth-child(2) { width: 158px; margin-left: 307px; background: #4a8cf8; }
    .task i:nth-child(3) { width: 162px; background: #153f98; }
    .task i:nth-child(4) { width: 158px; background: #4a8cf8; }
    .task i:nth-child(5) { width: 58px; margin-left: auto; background: #10a0f0; }

    .mark { position: absolute; right: 6px; bottom: 1px; z-index: 4; color: #1a6f9c; white-space: nowrap; text-shadow: 1px 0 #fdfbc8, -1px 0 #fdfbc8, 0 1px #fdfbc8, 0 -1px #fdfbc8; }
    .mark p { margin: 0; font: 23px/17px "Noto Sans CJK SC", sans-serif; }
    .mark em { font-size: 17px; font-style: normal; color: #e02818; margin-left: 3px; }
    .mark small { display: block; font: 21px/18px "Liberation Serif", serif; color: #3f8ab0; }
    .frame { position: relative; }
  `;

  private tip = (n: string, cls = "") => html`<button class=${cls} aria-label=${n}>${icon(n)}</button>`;

  private bar(groups: string[][]) {
    return html`<div class="bar">${groups.map((g) => html`<div class="seg"><span class="grip"></span>${g.map((n) => (n === "|" ? html`<span class="sep"></span>` : this.tip(n)))}
      <button class="cap" aria-label="more"><svg width="8" height="10" viewBox="0 0 8 10"><path d="M1 1.500h6" stroke="#fff"/><path d="M1 4h6l-3 4z" fill="#fff" stroke="#000" stroke-width=".6"/></svg></button></div>`)}</div>`;
  }

  private menu(items: Entry[]): unknown {
    return html`<ul class="menu">${items.map((e) => {
      if (e === null) return html`<li class="rule"></li>`;
      const it: Item = typeof e === "string" ? { label: e } : e;
      const lit = !!it.sub?.length || e === zoneMenu[0];
      return html`<li class=${lit ? "lit" : ""}><button>${it.label}${it.sub ? html`<i></i>` : nothing}</button>${it.sub?.length ? this.menu(it.sub) : nothing}</li>`;
    })}</ul>`;
  }

  private row(r: Row) {
    const node = r.kind !== "leaf";
    const guide = node
      ? html`<svg class="twist" viewBox="0 0 9 9"><path d="M.5 .5h8v8h-8z" fill="#fff" stroke="#888"/><path d=${r.kind === "open" ? "M2 4.500h5" : "M2 4.500h5M4.500 2v5"} stroke="#000"/></svg><span class="lead"></span>`
      : html`<svg class="elbow" viewBox="0 0 12 20"><path d=${`M.5 0V${r.last ? 10 : 20}M0 10.500H12`} stroke="#808080" stroke-dasharray="1 1" fill="none"/></svg>`;
    return html`<li class=${classMap({ ["lv" + r.level]: true, node })}>${guide}${r.cells}<span class="txt">${r.bold ? html`<b>${r.text}</b>` : r.text}</span></li>`;
  }

  private panel(title: string, rows: Row[], opts: { framed?: boolean; pins?: boolean; tabs?: unknown } = {}) {
    return html`<section class=${classMap({ panel: true, framed: !!opts.framed })}>
      <h2><span>${title}</span>${opts.pins ? html`${this.tip("pin")}${this.tip("close")}` : nothing}</h2>
      <div class="body">
        <div class="tools">${this.tip("objs")}${this.tip("gem")}<span class="sep"></span>${this.tip("table")}${this.tip("newdir")}</div>
        <ul class="tree">${rows.map((r) => this.row(r))}</ul>
      </div>
      ${opts.tabs ? html`<nav class="tabs dock-tabs">${opts.tabs}</nav>` : nothing}
    </section>`;
  }

  private canvas() {
    return html`<div class="canvas"><svg class="map" shape-rendering="crispEdges">
      <defs>
        <linearGradient id="h" x2="0" y2="1"><stop offset="0" stop-color="#707070"/><stop offset=".25" stop-color="#a0a0a0"/><stop offset=".7" stop-color="#fff"/><stop offset=".85" stop-color="#e8e8e8"/><stop offset="1" stop-color="#b0b0b0"/></linearGradient>
        <linearGradient id="v"><stop offset="0" stop-color="#606060"/><stop offset=".3" stop-color="#909090"/><stop offset=".65" stop-color="#fff"/><stop offset=".85" stop-color="#e0e0e0"/><stop offset="1" stop-color="#b8b8b8"/></linearGradient>
      </defs>
      ${columns.map(([x]) => svg`<rect x=${x} y="18" width="1" height="100%" fill="#a8a8a8"/>`)}
      ${lines.map((y) => svg`<rect x="18" y=${y} width="100%" height="1" fill="#a8a8a8"/>`)}
      <rect x="18" y="74" width="100%" height="1" fill="#000"/>
      <rect x="1" width="16" height="100%" fill="url(#v)"/>
      <rect width="100%" height="18" fill="url(#h)"/>
      ${columns.filter(([, t]) => t).map(([x, t]) => svg`<rect x=${x} y="1" width="1" height="17"/><text x=${x - 1} y="13" text-anchor="end" font-size="11">${t}</text><text x=${x + 2} y="13" font-size="11">000</text>`)}
      <rect x="1" y="715" width="17" height="1"/>
      <text transform="translate(13 713) rotate(-90)" font-size="11">000</text>
      <text transform="translate(13 730) rotate(-90)" font-size="11">86</text>
      <svg x="100%" overflow="visible" shape-rendering="auto"><path d="M-51 1q6 2 8 8t8 8h34V1z" fill="#d8d8d8" fill-opacity=".75"/><path d="M-51 1q6 2 8 8t8 8h34" fill="none" stroke="#555" stroke-width="1.500"/><text x="-30" y="12" font-size="11">404</text></svg>
      <svg y="100%" overflow="visible" shape-rendering="auto"><path d="M2-53q1 5 7 8t7 6V0" fill="none" stroke="#444" stroke-width="1.500"/><text transform="translate(13 -14) rotate(-90)" font-size="11">28</text></svg>
    </svg></div>`;
  }

  render() {
    return html`
      <header class="title">${icon("app")}
        <h1>YTLWorld - C:\\Documents and Settings\\YTL\\My Documents\\0<span>工程勘察</span>6.YTL - [<span>空间图形</span>]</h1>
        <div class="winbtns">
          <button aria-label="minimize"><svg viewBox="0 0 19 19"><path d="M4 13h7v3H4z" fill="#fff"/></svg></button>
          <button aria-label="restore"><svg viewBox="0 0 19 19"><path d="M7 7V4h8v7h-3M4 8h8v7H4zM4 9h8M7 5h8" fill="none" stroke="#fff" stroke-width="1.300"/></svg></button>
          <button aria-label="close"><svg viewBox="0 0 19 19"><path d="M5 5l9 9M14 5l-9 9" stroke="#fff" stroke-width="2.200"/></svg></button>
        </div>
      </header>
      <nav class="menubar">${menus.map((m, i) => html`<div class=${i === 2 ? "on" : ""}><button>${m}</button>${i === 2 ? this.menu(spaceMenu) : nothing}</div>`)}</nav>
      ${this.bar(barOne)}${this.bar(barTwo)}
      <main class="main">
        <aside class="left">
          ${this.panel("布局", layoutRows, { framed: true, tabs: html`<button class="div">${icon("globe")}空间图形</button><button>${icon("chart")}剖面图形</button>` })}
          ${this.panel("查询表", queryRows, { framed: true, tabs: html`<button>${icon("attr")}属性表</button><button class="cur">${icon("query")}查询表</button>` })}
        </aside>
        <section class="center">
          ${this.canvas()}
          <nav class="tabs">${docTabs.map((t, i) => html`<button class=${i === 1 ? "cur" : i > 1 ? "div" : ""}>${icon("doc")}${i === 1 ? html`<b>${t}</b>` : t}</button>`)}
            <span class="nav">${this.tip("prev")}${this.tip("next")}${this.tip("close")}</span></nav>
        </section>
        <aside class="right">
          ${this.panel("线图例", lineRows, { pins: true })}
          ${this.panel("点图例", pointRows, { pins: true })}
          ${this.panel("花纹图例", patRows, { pins: true })}
          ${this.panel("颜色图例", colRows, { pins: true, framed: true, tabs: html`<button class="cur">${icon("palette")}颜色图例</button><button class="div">${icon("font")}字体图例</button>` })}
        </aside>
      </main>
      <footer class="frame">
        <div class="query">
          <div class="cols">
            <form class="opts">
              <b>选择图元：</b><span class="op">鼠标操作&gt;&gt;</span>
              <label class="r1"><input type="radio" name="op" checked>增加选择</label>
              <label><input type="radio" name="op">剔除选择</label>
              <hr class="first"><a href="#filter">条件选择</a><hr><a href="#attrs">属性显示</a><hr>
              <span>图形窗口中心(㎞)&gt;&gt;</span>
              <label class="gap">水平<input class="w1" type="text" value="40426.649"></label>
              <label>垂直<input class="w2" type="text" value="2889.772"></label>
              <hr><label>显示比例尺<input class="w3" type="text" value="50000.000"></label>
            </form>
            <p class="msg"><b>当前选择：</b><span>当前未选定图元，可以点取或开窗口选择图元，当按钮“剔除图元”选中时，则从选择集中剔除已选定的图元</span></p>
          </div>
          <div class="scroll">
            <button aria-label="up"><svg width="9" height="6" viewBox="0 0 9 6"><path d="M1 5l3.500-3.500L8 5" fill="none" stroke="#4d6185" stroke-width="2"/></svg></button>
            <button class="thumb" aria-label="scroll"></button>
            <button aria-label="down"><svg width="9" height="6" viewBox="0 0 9 6"><path d="M1 1l3.500 3.500L8 1" fill="none" stroke="#4d6185" stroke-width="2"/></svg></button>
          </div>
        </div>
        <div class="status">
          <span class="s1">光标位置：<i>Horz=40417.627km,Vert=2894.481km</i></span>
          <span class="s2">比例尺：<i>50000.000</i></span>
          <span class="s3">坐标系统：北京<i>54</i></span>
          <span class="s4">地图投影：<i>3</i>度<i>40</i>带高斯<i>-</i>克里格投影</span>
        </div>
        <div class="task"><i></i><i></i><i></i><i></i><i></i></div>
        <div class="mark"><p>地信网<em>论坛</em></p><small>bbs.3s001.com</small></div>
      </footer>`;
  }
}
